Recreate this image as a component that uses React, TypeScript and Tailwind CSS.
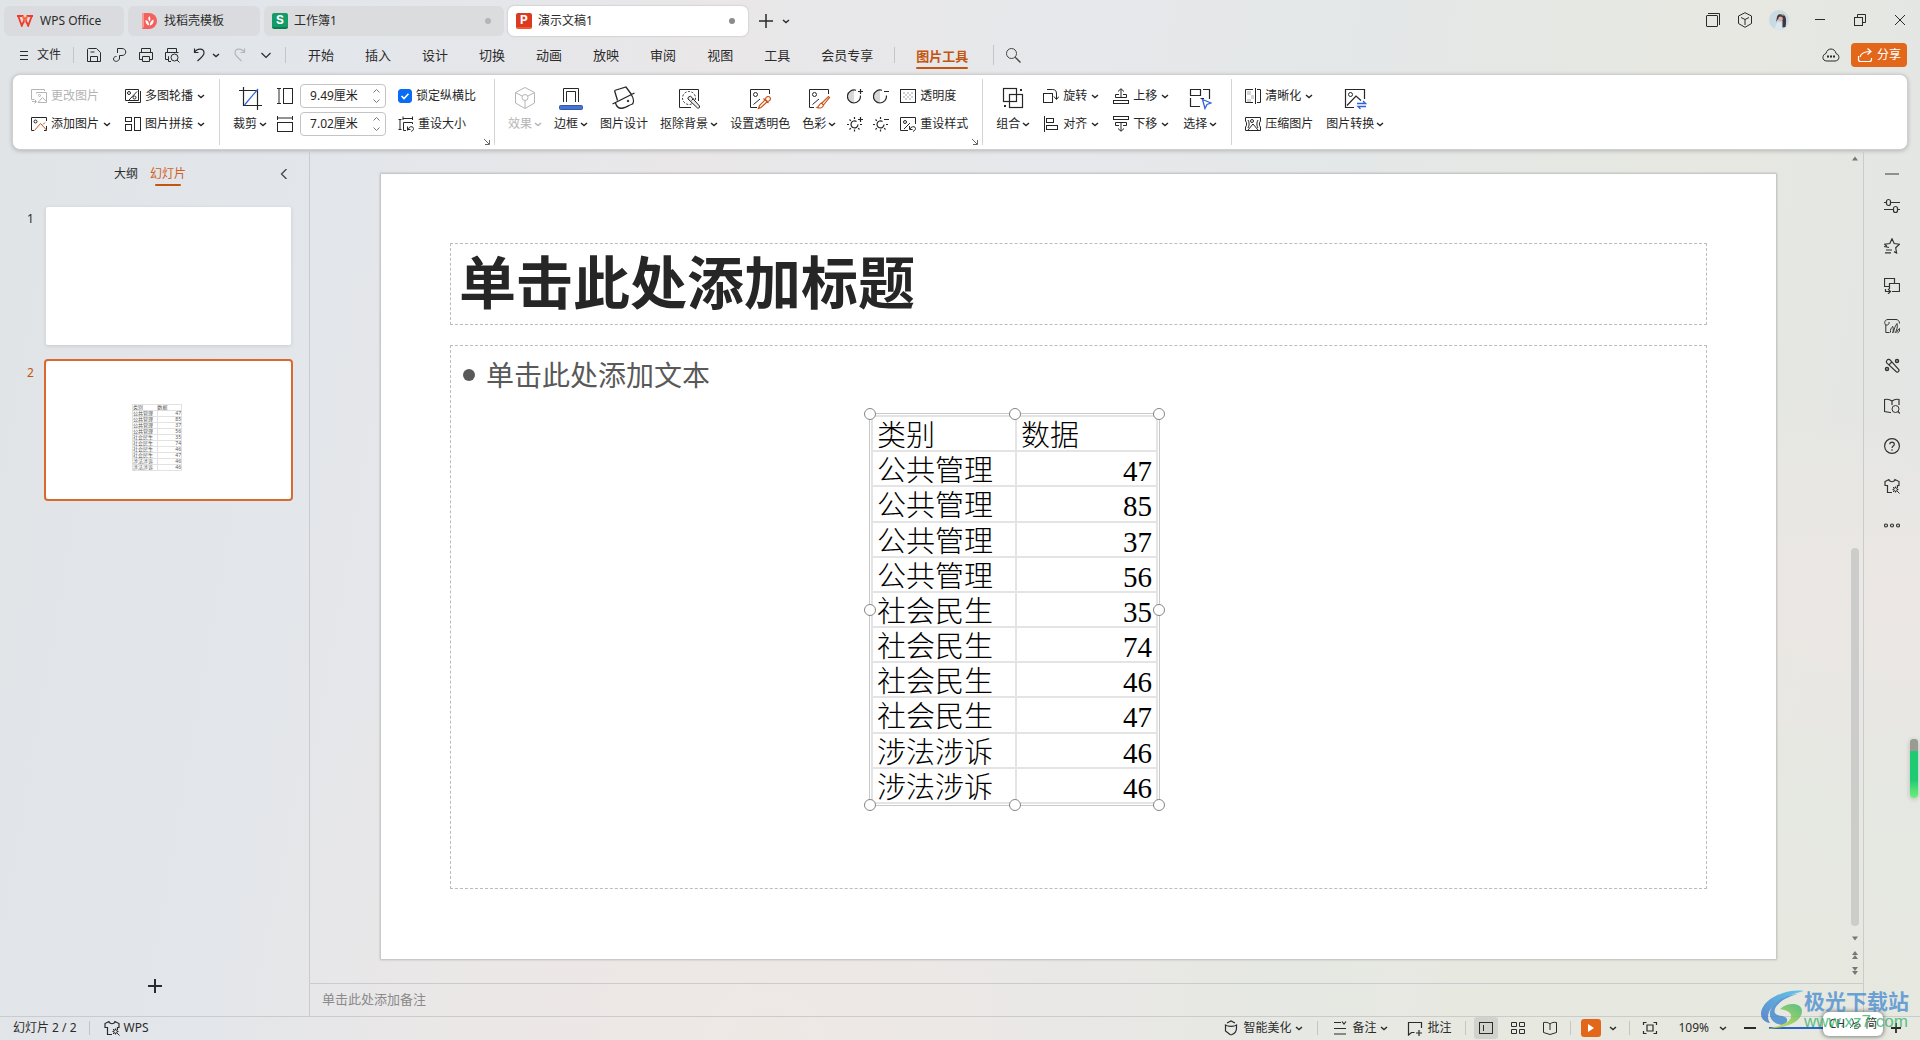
import React, { useState } from 'react';

type IconProps = {
  size?: number;
  className?: string;
  children?: React.ReactNode;
};

function Svg({ size = 16, className = '', children }: IconProps) {
  return (
    <svg
      width={size}
      height={size}
      viewBox={`0 0 ${size} ${size}`}
      fill="none"
      stroke="currentColor"
      strokeWidth={1}
      aria-hidden="true"
      className={`shrink-0 ${className}`}
    >
      {children}
    </svg>
  );
}

function Chevron({ className = '' }: { className?: string }) {
  return (
    <svg width="8" height="8" viewBox="0 0 8 8" fill="none" stroke="currentColor" strokeWidth="1.4" aria-hidden="true" className={`shrink-0 ${className}`}>
      <path d="M1 3 L4 5.6 L7 3" />
    </svg>
  );
}

const ORANGE = '#c9531a';
const BLUE = '#2f62d9';

/* ---------- small ribbon icons ---------- */
const ChangePicIcon = () => (
  <Svg>
    <path d="M3 11.5H.5V1.5H13.5V3M5.5 5.5V4.5H15.5V14.5H7M7 14.5L11.5 9.5L15 13M1 13.500H5.500M3.500 11.500L5.500 13.500L3.500 15.500" />
    <circle cx="8.500" cy="7.500" r="1" />
  </Svg>
);
const AddPicIcon = () => (
  <Svg>
    <path d="M3 14.500H.5V1.500H15.500V5M15.500 10V14.500H13" />
    <circle cx="4.500" cy="5.500" r="1.500" />
    <path d="M3.500 14.500L9.500 7.500L15.500 14M12 8.500L14 6.500" stroke={ORANGE} />
  </Svg>
);
const CarouselIcon = () => (
  <Svg>
    <path d="M13.500 12.500V1.500H.5V12.500H13.500M15.500 3V14.500H3M4 12L12 3.500" />
    <circle cx="4" cy="5" r="1.500" />
    <circle cx="9.500" cy="9.500" r="1.500" />
  </Svg>
);
const CollageIcon = () => (
  <Svg>
    <rect x=".5" y="1.500" width="6" height="4" />
    <rect x=".5" y="8.500" width="6" height="6" />
    <rect x="9.500" y="1.500" width="6" height="13" />
  </Svg>
);
const HeightIcon = () => (
  <Svg>
    <path d="M0 .5H4M0 15.500H4M2 1V15" />
    <rect x="6.500" y=".5" width="9" height="15" />
  </Svg>
);
const WidthIcon = () => (
  <Svg>
    <path d="M.5 0V4M15.500 0V4M1 2H15" />
    <rect x=".5" y="6.500" width="15" height="9" />
  </Svg>
);
const ResetSizeIcon = () => (
  <Svg>
    <path d="M5 .5V4M14.500 .5V4M5 2.500H14.500M.5 3.500H3.500M.5 13.500H3.500M2 3.500V13.500M8 14.500H5.500V6.500H14.500V8M9.500 14.500V12M10.500 13C11 10 15.500 10 15.500 12.500C15.500 14.500 14 15 13 15.500M9.500 10.500V13.500H12.500" />
  </Svg>
);
const ContrastIcon = ({ plus }: { plus?: boolean }) => (
  <Svg>
    <path d="M7 2A6.500 6.500 0 0 0 7 15Z" fill="#d8d8d8" stroke="none" />
    <path d="M9 2.300A6.500 6.500 0 1 0 13.400 7.500M11 3.500H16" strokeWidth="1.200" />
    {plus && <path d="M13.500 1V6" strokeWidth="1.200" />}
  </Svg>
);
const BrightIcon = ({ plus }: { plus?: boolean }) => (
  <Svg>
    <path d="M9.500 5.500A3.500 3.500 0 1 0 11 8.500M7.500 1V3M7.500 13.500V15.500M0 8.500H2M13 8.500H15M2.500 3.500L3.800 4.800M2.500 13.500L3.800 12.200M12.500 13.500L11.200 12.200M11 3.500H16" strokeWidth="1.200" />
    {plus && <path d="M13.500 1V6" strokeWidth="1.200" />}
  </Svg>
);
const TransparencyIcon = () => (
  <Svg>
    <g fill="#d0d0d0" stroke="none">
      <path d="M3 4h2v2h-2zM7 4h2v2h-2zM11 4h2v2h-2zM5 6h2v2h-2zM9 6h2v2h-2zM3 8h2v2h-2zM7 8h2v2h-2zM11 8h2v2h-2zM5 10h2v2h-2zM9 10h2v2h-2z" />
    </g>
    <rect x=".5" y="1.500" width="15" height="13" />
  </Svg>
);
const ResetStyleIcon = () => (
  <Svg>
    <path d="M8 14.500H.5V1.500H15.500V8M4 13L10 7M9.500 10V13.500H12.500M10 13C11 10 15.500 10 15.500 12.500C15.500 14 14.500 14.500 13 15.500" />
    <circle cx="5" cy="6" r="1.500" />
  </Svg>
);
const RotateIcon = () => (
  <Svg>
    <rect x=".5" y="5.500" width="9" height="9" />
    <path d="M4 1.500H9.500C12.500 1.500 13.500 3 13.500 6V11M11 8.500L13.500 11.500L16 8.500" />
  </Svg>
);
const AlignIcon = () => (
  <Svg>
    <path d="M1.500 0V16" />
    <rect x="3.500" y="2.500" width="7" height="4" />
    <rect x="3.500" y="9.500" width="11" height="4" />
  </Svg>
);
const MoveUpIcon = () => (
  <Svg>
    <path d="M8 10V1M5 3.500L8 .7L11 3.500M6 6.500H2.500V9.500H13.500V6.500H10" />
    <rect x=".5" y="12.500" width="15" height="3" />
  </Svg>
);
const MoveDownIcon = () => (
  <Svg>
    <path d="M8 6V15M5 12.500L8 15.300L11 12.500M6 9.500H2.500V6.500H13.500V9.500H10" />
    <rect x=".5" y=".5" width="15" height="3" />
  </Svg>
);
const ClarityIcon = () => (
  <Svg>
    <path d="M2 3h4v4h-4zM6 7h3v4h-3zM2 11h4v3h-4z" fill="#d5d5d5" stroke="none" />
    <path d="M8 1.500H.5V14.500H8M10.500 0V16M12 1.500H15.500V14.500H12" />
  </Svg>
);
const CompressIcon = () => (
  <Svg>
    <path d="M.5 5V1.500H15.500V5M15.500 11V14.500H.5V11M3 14L8 8L13 14M.5 5C2 6 2 10 .5 11M15.500 5C14 6 14 10 15.500 11M3 4C4.500 6 4.500 10 3 12M13 4C11.500 6 11.500 10 13 12" />
    <circle cx="7" cy="5" r="1.500" />
  </Svg>
);

/* ---------- large ribbon icons ---------- */
const CropIcon = () => (
  <Svg size={24}>
    <path d="M1 4.500H19.500V24M5.500 1V19.500H24" strokeWidth="1.200" />
    <path d="M6.500 19L20 3" stroke={BLUE} strokeWidth="1.200" />
  </Svg>
);
const EffectIcon = () => (
  <Svg size={24}>
    <path d="M12 1.500L21.500 6.500V17L12 22.500L2.500 17V6.500ZM2.500 6.500L9 10M21.500 6.500L15 10M12 14.500V22" />
    <circle cx="12" cy="11.500" r="3" />
  </Svg>
);
const BorderIcon = () => (
  <Svg size={24}>
    <path d="M4.500 16V2.500H19.500V16M7.500 16V5.500H16.500V16" />
    <rect x=".5" y="19.500" width="23" height="4" rx="1" fill="#4674cf" stroke="#2f5ab0" />
  </Svg>
);
const DesignIcon = () => (
  <Svg size={24}>
    <path d="M.5 18L22.500 7M2.500 4.500L14 1L19.500 8.500M2.500 4.500L5.500 14.500M3.500 17C4.500 20.500 7 23 11 22C15 21 16 19.500 20.500 18C22 16 21.500 12 19.500 9" strokeWidth="1.300" />
    <circle cx="16" cy="15" r=".8" fill="currentColor" />
  </Svg>
);
const RemoveBgIcon = () => (
  <Svg size={24}>
    <path d="M14 21.500H2.500V3.500H21.500V15" />
    <circle cx="12" cy="12" r="6.500" strokeDasharray="2 1.600" />
    <path d="M11 11.500L13.500 10L22.500 20C23 21.500 22 22.500 20.500 22L11 13Z" fill="#ececec" />
    <path d="M14.500 14.500L16.500 12.500" />
  </Svg>
);
const SetTransIcon = () => (
  <Svg size={24}>
    <path d="M9 21.500H2.500V3.500H21.500V8M5.500 18.500L12 13" />
    <circle cx="7.500" cy="8.500" r="2" />
    <path d="M10.500 22.500L11.500 19.500L17.500 13.500L19.500 15.500L13 21.500ZM15.500 12.500L20.500 17M17.500 13C18 10 21 10 22 11.500C23 13 22 15.500 19.500 15.500" stroke={ORANGE} strokeWidth="1.200" />
  </Svg>
);
const ColorIcon = () => (
  <Svg size={24}>
    <path d="M7 21.500H2.500V3.500H21.500V8M5.500 18.500L12 13" />
    <circle cx="7.500" cy="8.500" r="2" />
    <path d="M14.500 17.500L21.500 10.500L22.500 11.500L16.500 19M14.500 17L16.500 19C16 22 13 22.500 10 21.500C12 20.500 12 18 14.500 17Z" stroke={ORANGE} strokeWidth="1.200" />
  </Svg>
);
const GroupIcon = () => (
  <Svg size={24}>
    <rect x="2.500" y="2.500" width="13" height="13" strokeWidth="1.200" />
    <rect x="8.500" y="8.500" width="13" height="13" strokeWidth="1.200" />
    <path d="M19 3h2v2h-2zM3 19h2v2h-2z" fill="currentColor" stroke="none" />
  </Svg>
);
const SelectIcon = () => (
  <Svg size={24}>
    <path d="M2.500 9.500V3.500H12.500V9.500H2M15 3.500H21.500V13M2.500 12V20.500H12M12.500 12.500H16" strokeWidth="1.200" />
    <path d="M14.500 13.500L23 17L19 18.500L17 22.500Z" stroke={BLUE} strokeWidth="1.300" />
  </Svg>
);
const ConvertIcon = () => (
  <Svg size={24}>
    <path d="M11 21.500H2.500V3.500H21.500V13M4 19.500L13 10L18 14.500" strokeWidth="1.200" />
    <circle cx="7.500" cy="8.500" r="2" />
    <path d="M14 17.500H22.500L20 15M23 20.500H15L17.500 23" stroke={BLUE} strokeWidth="1.300" />
  </Svg>
);

/* ---------- ribbon building blocks ---------- */
function SmallTool({ icon, label, menu, disabled }: { icon: React.ReactNode; label: string; menu?: boolean; disabled?: boolean }) {
  return (
    <button type="button" disabled={disabled} className="flex h-7 items-center gap-1 whitespace-nowrap disabled:text-[#b4b4b4]">
      {icon}
      <span>{label}</span>
      {menu && <Chevron />}
    </button>
  );
}

function LargeTool({ icon, label, menu, disabled }: { icon: React.ReactNode; label: string; menu?: boolean; disabled?: boolean }) {
  return (
    <button type="button" disabled={disabled} className="flex flex-col items-center whitespace-nowrap disabled:text-[#b4b4b4]">
      <span className="flex h-7 items-center pt-1">{icon}</span>
      <span className="flex h-7 items-center gap-0.5">
        {label}
        {menu && <Chevron />}
      </span>
    </button>
  );
}

function SizeInput({ icon, label, value }: { icon: React.ReactNode; label: string; value: string }) {
  return (
    <label className="flex h-7 items-center gap-[7px]">
      {icon}
      <span className="flex h-6 w-[86px] items-center rounded-[4px] border border-[#c4c4c4] bg-white pr-1">
        <input aria-label={label} defaultValue={value} className="w-full min-w-0 bg-transparent pl-[9px] text-xs outline-none" />
        <svg width="9" height="16" viewBox="0 0 9 16" fill="none" stroke="#777" className="shrink-0" aria-hidden="true">
          <path d="M1.500 4.500L4.500 1.500L7.500 4.500M1.500 11.500L4.500 14.500L7.500 11.500" />
        </svg>
      </span>
    </label>
  );
}

const Divider = () => <div className="my-1 w-px shrink-0 self-stretch bg-[#d4d4d4]" />;

const Launcher = () => (
  <button type="button" aria-label="更多选项" className="absolute right-1 bottom-1 text-[#666]">
    <Svg size={7}>
      <path d="M1 1L6 6M6.500 2V6.500H2" />
    </Svg>
  </button>
);

function RibbonGroup({ children, launcher, wide }: { children: React.ReactNode; launcher?: boolean; wide?: boolean }) {
  return (
    <div className={`relative flex shrink-0 items-start pt-[7px] pl-[13px] ${wide ? 'pr-[18px]' : 'pr-[14px]'}`}>
      {children}
      {launcher && <Launcher />}
    </div>
  );
}

/* ---------- header ---------- */
function TitleBar() {
  return (
    <header className="flex h-9 shrink-0 items-end pl-1 text-xs text-[#2b2b2b]">
      <nav aria-label="文档标签" className="flex h-[30px] gap-1">
        <button type="button" className="flex w-[120px] items-center gap-[7px] rounded-md bg-[#d9dbde] pl-[13px]">
          <svg width="16" height="12" viewBox="0 0 16 12" fill="none" stroke="#ee3323" strokeWidth="1.800" aria-hidden="true">
            <path d="M0 1H6.500M9.500 1H16M1.200 1L4.800 10.800L8 3.500L11.200 10.800L14.800 1" stroke="#f03a2a" />
            <path d="M5.500 1L8 6.500L10.500 1" stroke="#ff6c47" />
          </svg>
          WPS Office
        </button>
        <button type="button" className="flex w-[132px] items-center gap-[7px] rounded-md bg-[#d9dbde] pl-3.5">
          <svg width="15" height="16" viewBox="0 0 15 16" aria-hidden="true">
            <path d="M0 0H7A8 8 0 0 1 7 16H0Z" fill="#f2615e" />
            <path d="M0 0H2V14L0 16Z" fill="#f89a94" />
            <path d="M7.200 3C9 5 8.500 7 7.500 8.500C6 6.500 6 5 7.200 3ZM3.500 7C6 7.500 7 9.500 7.200 12.500C4.500 12 3.300 9.500 3.500 7ZM11.500 6.500C9 7.500 8 9.500 7.800 12.500C10.500 12 12 9.500 11.500 6.500Z" fill="#fff" />
          </svg>
          找稻壳模板
        </button>
        <button type="button" className="flex w-60 items-center gap-1.5 rounded-md bg-[#dadcdd] pr-[13px] pl-2">
          <span className="flex size-4 items-center justify-center rounded-xs border-b-2 border-[#0c7d50] bg-[#149c68] font-[Inter] text-xs leading-none font-bold text-white">S</span>
          工作簿1
          <span className="ml-auto size-1.5 rounded-full bg-[#b3b5b7]" />
        </button>
        <button type="button" className="flex w-60 items-center gap-1.5 rounded-md bg-white pr-[13px] pl-2 shadow-[0_0_2px_rgba(0,0,0,0.25)]">
          <span className="flex size-4 items-center justify-center rounded-xs border-b-2 border-[#f4562f] bg-[#dc3a20] font-[Inter] text-xs leading-none font-bold text-white">P</span>
          演示文稿1
          <span className="ml-auto size-1.5 rounded-full bg-[#8b8b8b]" />
        </button>
      </nav>
      <button type="button" aria-label="新建" className="ml-2.5 flex h-[30px] items-center">
        <Svg size={16}>
          <path d="M1 8H15M8 1V15" strokeWidth="1.500" />
        </Svg>
      </button>
      <button type="button" aria-label="标签列表" className="ml-2 flex h-[30px] items-center">
        <Chevron />
      </button>
      <div className="ml-auto flex h-8 items-center">
        <button type="button" aria-label="窗口" className="flex w-8 justify-center">
          <Svg><rect x="1.500" y="3.500" width="11" height="11" rx=".5" /><path d="M3 1.500H14.500V13" /></Svg>
        </button>
        <button type="button" aria-label="应用" className="flex w-8 justify-center">
          <Svg><path d="M8 .7L14.500 4V11.500L8 15.300L1.500 11.500V4ZM4 5.500L8 7.500L12 5.500M8 7.500V13" /></Svg>
        </button>
        <button type="button" aria-label="账户" className="flex w-9 justify-center">
          <svg width="20" height="20" viewBox="0 0 20 20" aria-hidden="true">
            <circle cx="10" cy="10" r="10" fill="#c9dae3" />
            <path d="M8 7C9 3 15 3 16.500 7C17.500 10 17 14 16.500 17L13.500 17.500L13.500 11L9 9L7 12Z" fill="#3d3540" />
            <path d="M10.500 4.500L14 4L15 6Z" fill="#c9a15e" />
            <circle cx="11.500" cy="9" r="2.400" fill="#e0aea4" />
            <path d="M6 19C6 14 9 11.500 12 12L13 19C11 20 8 20 6 19Z" fill="#dce8f0" />
          </svg>
        </button>
        <button type="button" aria-label="最小化" className="ml-[3px] flex w-10 justify-center"><Svg><path d="M3 7.500H13" /></Svg></button>
        <button type="button" aria-label="还原" className="flex w-10 justify-center">
          <Svg><rect x="2.500" y="5.500" width="8" height="8" /><path d="M5.500 5V2.500H13.500V10.500H11" /></Svg>
        </button>
        <button type="button" aria-label="关闭" className="flex w-10 justify-center"><Svg><path d="M3 3L13 13M13 3L3 13" /></Svg></button>
      </div>
    </header>
  );
}

const MENUS = ['开始', '插入', '设计', '切换', '动画', '放映', '审阅', '视图', '工具', '会员专享'];

function MenuBar() {
  return (
    <div className="flex h-[38px] shrink-0 items-center pr-[13px] pl-5 text-[#2b2b2b]">
      <button type="button" className="flex items-center gap-2 text-xs">
        <Svg size={9}><path d="M0 .5H8M0 4.500H8M0 8.500H8" /></Svg>
        文件
      </button>
      <div className="ml-3 h-4 w-px bg-[#c3c6c9]" />
      <div className="flex items-center">
        <button type="button" aria-label="保存" className="ml-3 flex"><Svg><path d="M1.500 2.500C1.500 2 2 1.500 2.500 1.500H10.500L14.500 5.500V14.500H1.500ZM4.500 14.500V9.500H11.500V14.500M4.500 5H8.500" /></Svg></button>
        <button type="button" aria-label="输出" className="ml-2.5 flex"><Svg><path d="M5.500 6V1.500H10C15 1.500 15 8.500 10 8.500H7.500V11C7.500 15 1.500 15.500 1.500 12C1.500 9.800 3.500 9.500 4.500 9.500" /></Svg></button>
        <button type="button" aria-label="打印" className="ml-2.5 flex"><Svg><path d="M3.500 5.500V1.500H12.500V5.500M4 12.500H1.500V5.500H14.500V12.500H12M4.500 9.500H11.500V14.500H4.500Z" /></Svg></button>
        <button type="button" aria-label="打印预览" className="ml-2.5 flex"><Svg><path d="M3.500 5.500V1.500H12.500V5.500M4 12.500H1.500V5.500H14.500M5 9.500H4.500V14.500H7M13 13L15.500 15.500" /><circle cx="10.500" cy="10.500" r="3.500" /></Svg></button>
        <button type="button" aria-label="撤销" className="ml-3 flex"><Svg><path d="M2.500 1.500V5.500H6.500M2.500 5.500C5 1 12 1 12 6C12 9 9.500 10 5.500 14" strokeWidth="1.200" /></Svg></button>
        <button type="button" aria-label="撤销列表" className="ml-1 flex"><Chevron /></button>
        <button type="button" aria-label="重做" className="ml-3 flex text-[#b3b6b9]"><Svg><path d="M12.500 1.500V5.500H8.500M12.500 5.500C10 1 3 1 3 6C3 9 5.500 10 9.500 14" strokeWidth="1.200" /></Svg></button>
        <button type="button" aria-label="自定义" className="ml-3 flex"><Svg size={12}><path d="M1.500 4L6 8.500L10.500 4" strokeWidth="1.200" /></Svg></button>
      </div>
      <div className="ml-[13px] h-4 w-px bg-[#c3c6c9]" />
      <nav aria-label="菜单" className="ml-[22px] flex gap-[31px] pt-0.5 text-[13px]">
        {MENUS.map((m) => (
          <button type="button" key={m}>{m}</button>
        ))}
      </nav>
      <div className="ml-[21px] h-4 w-px bg-[#c3c6c9]" />
      <button type="button" className="ml-[21px] flex flex-col gap-px pt-1 text-[13px] font-bold text-[#c3560f]">
        <span className="leading-5">图片工具</span>
        <span className="h-0.5 w-full rounded-full bg-[#c3560f]" />
      </button>
      <div className="ml-[25px] h-5 w-px bg-[#c3c6c9]" />
      <button type="button" aria-label="搜索" className="ml-[11px] flex text-[#444]"><Svg><circle cx="6.500" cy="6.500" r="5" /><path d="M10.200 10.200L15.500 15.500" strokeWidth="1.300" /></Svg></button>
      <button type="button" aria-label="云" className="ml-auto flex">
        <svg width="18" height="14" viewBox="0 0 18 14" fill="none" stroke="currentColor" aria-hidden="true">
          <path d="M5 13C-.5 13 0 6.500 4 5.500C5 -.5 13 -.5 14 5.500C18 6.500 18 13 13 13Z" />
          <path d="M5 8.500H7M8 8.500H10M11 8.500H13" strokeWidth="2" />
        </svg>
      </button>
      <button type="button" className="ml-[11px] flex h-6 w-14 items-center gap-1 rounded-[4px] bg-[#e2671b] pl-1.5 text-xs text-white">
        <Svg><path d="M1.500 9V12.500C1.500 14 2 14.500 3.500 14.500H12.500C14 14.500 14.500 14 14.500 12.500V11M3 10C4 6 8 4.500 14 4.500M10.500 1.500L14 4.500L10.500 7.500" strokeWidth="1.200" /></Svg>
        分享
      </button>
    </div>
  );
}

function Ribbon() {
  const [locked, setLocked] = useState(true);
  return (
    <section aria-label="图片工具" className="mr-3 ml-3 flex h-[76px] shrink-0 rounded-lg border border-[#cfcfcf] bg-white pl-[5px] text-xs text-[#262626] shadow-[0_1px_4px_rgba(0,0,0,0.22)]">
      <RibbonGroup>
        <div className="flex gap-3.5">
          <div className="flex flex-col items-start">
            <SmallTool icon={<ChangePicIcon />} label="更改图片" disabled />
            <SmallTool icon={<AddPicIcon />} label="添加图片" menu />
          </div>
          <div className="flex flex-col items-start">
            <SmallTool icon={<CarouselIcon />} label="多图轮播" menu />
            <SmallTool icon={<CollageIcon />} label="图片拼接" menu />
          </div>
        </div>
      </RibbonGroup>
      <Divider />
      <RibbonGroup launcher wide>
        <LargeTool icon={<CropIcon />} label="裁剪" menu />
        <div className="ml-2.5 flex flex-col">
          <SizeInput icon={<HeightIcon />} label="高度" value="9.49厘米" />
          <SizeInput icon={<WidthIcon />} label="宽度" value="7.02厘米" />
        </div>
        <div className="ml-3 flex flex-col items-start">
          <label className="flex h-7 items-center gap-1">
            <span className="relative flex size-3.5">
              <input type="checkbox" checked={locked} onChange={(e) => setLocked(e.target.checked)} className="size-3.5 appearance-none rounded-[3px] border border-[#0a6cf5] checked:bg-[#0a6cf5]" />
              {locked && (
                <svg width="14" height="14" viewBox="0 0 14 14" fill="none" stroke="#fff" strokeWidth="1.600" className="pointer-events-none absolute inset-0" aria-hidden="true">
                  <path d="M3.500 7L6 9.500L10.500 4.800" />
                </svg>
              )}
            </span>
            锁定纵横比
          </label>
          <SmallTool icon={<ResetSizeIcon />} label="重设大小" />
        </div>
      </RibbonGroup>
      <Divider />
      <RibbonGroup launcher>
        <div className="flex gap-3">
          <LargeTool icon={<EffectIcon />} label="效果" menu disabled />
          <LargeTool icon={<BorderIcon />} label="边框" menu />
          <LargeTool icon={<DesignIcon />} label="图片设计" />
          <LargeTool icon={<RemoveBgIcon />} label="抠除背景" menu />
          <LargeTool icon={<SetTransIcon />} label="设置透明色" />
          <LargeTool icon={<ColorIcon />} label="色彩" menu />
        </div>
        <div className="ml-[11px] grid grid-cols-2 gap-x-2.5">
          <button type="button" aria-label="增加对比度" className="flex h-7 items-center"><ContrastIcon plus /></button>
          <button type="button" aria-label="降低对比度" className="flex h-7 items-center"><ContrastIcon /></button>
          <button type="button" aria-label="增加亮度" className="flex h-7 items-center"><BrightIcon plus /></button>
          <button type="button" aria-label="降低亮度" className="flex h-7 items-center"><BrightIcon /></button>
        </div>
        <div className="ml-[11px] flex flex-col items-start">
          <SmallTool icon={<TransparencyIcon />} label="透明度" />
          <SmallTool icon={<ResetStyleIcon />} label="重设样式" />
        </div>
      </RibbonGroup>
      <Divider />
      <RibbonGroup>
        <LargeTool icon={<GroupIcon />} label="组合" menu />
        <div className="ml-[13px] flex gap-3.5">
          <div className="flex flex-col items-start">
            <SmallTool icon={<RotateIcon />} label="旋转" menu />
            <SmallTool icon={<AlignIcon />} label="对齐" menu />
          </div>
          <div className="flex flex-col items-start">
            <SmallTool icon={<MoveUpIcon />} label="上移" menu />
            <SmallTool icon={<MoveDownIcon />} label="下移" menu />
          </div>
          <LargeTool icon={<SelectIcon />} label="选择" menu />
        </div>
      </RibbonGroup>
      <Divider />
      <RibbonGroup>
        <div className="flex gap-[13px]">
          <div className="flex flex-col items-start">
            <SmallTool icon={<ClarityIcon />} label="清晰化" menu />
            <SmallTool icon={<CompressIcon />} label="压缩图片" />
          </div>
          <LargeTool icon={<ConvertIcon />} label="图片转换" menu />
        </div>
      </RibbonGroup>
    </section>
  );
}

/* ---------- slide content ---------- */
const ROWS: [string, number][] = [
  ['公共管理', 47],
  ['公共管理', 85],
  ['公共管理', 37],
  ['公共管理', 56],
  ['社会民生', 35],
  ['社会民生', 74],
  ['社会民生', 46],
  ['社会民生', 47],
  ['涉法涉诉', 46],
  ['涉法涉诉', 46],
];

function ThumbTable() {
  return (
    <table className="w-[50px] table-fixed border-collapse text-left text-[5px] leading-none text-[#555]">
      <tbody>
        <tr className="h-1.5">
          <td className="border border-[#e2e2e2]">类别</td>
          <td className="border border-[#e2e2e2]">数据</td>
        </tr>
        {ROWS.map(([name, n], i) => (
          <tr key={i} className="h-1.5">
            <td className="border border-[#e2e2e2]">{name}</td>
            <td className="border border-[#e2e2e2] text-right">{n}</td>
          </tr>
        ))}
      </tbody>
    </table>
  );
}

function SlidePanel() {
  return (
    <aside className="flex w-[310px] shrink-0 flex-col border-r border-[#c9cbcd] text-xs">
      <div className="flex h-[57px] items-start pt-[15px] pl-[114px]">
        <button type="button" className="leading-[18px]">大纲</button>
        <button type="button" className="ml-3 flex flex-col items-center gap-px text-[#d0601f]">
          <span className="leading-[18px]">幻灯片</span>
          <span className="h-0.5 w-[26px] rounded-full bg-[#c3560f]" />
        </button>
        <button type="button" aria-label="收起" className="mr-5 ml-auto flex text-[#444]"><Svg size={10} className="mt-1"><path d="M7.500 0L2.500 5L7.500 10" strokeWidth="1.300" /></Svg></button>
      </div>
      <div className="flex flex-1 flex-col gap-3.5 pl-[27px]">
        <div className="flex">
          <span className="w-[17px] pt-[3px] leading-[18px]">1</span>
          <button type="button" aria-label="幻灯片 1" className="ml-0.5 h-[138px] w-[245px] rounded-xs bg-white shadow-[0_1px_4px_rgba(0,0,0,0.12)]" />
        </div>
        <div className="flex">
          <span className="w-[17px] pt-[5px] leading-[18px] text-[#c3560f]">2</span>
          <button type="button" aria-label="幻灯片 2" className="flex h-[142px] w-[249px] items-center rounded-[4px] border-2 border-[#d9692c] bg-white pt-3.5 pl-[86px]">
            <ThumbTable />
          </button>
        </div>
      </div>
      <div className="flex justify-center pb-[21px]">
        <button type="button" aria-label="新建幻灯片" className="flex"><Svg size={18}><path d="M2 9H16M9 2V16" strokeWidth="2" /></Svg></button>
      </div>
    </aside>
  );
}

const HANDLES = [
  'left-0 top-0',
  'left-1/2 top-0',
  'left-full top-0',
  'left-0 top-1/2',
  'left-full top-1/2',
  'left-0 top-full',
  'left-1/2 top-full',
  'left-full top-full',
];

function PictureOnSlide() {
  return (
    <div className="absolute top-[239px] left-[488px] border border-[#c9c9c9] p-px">
      <table className="h-[389px] w-[287px] table-fixed border-collapse font-['Liberation_Serif','Noto_Sans_CJK_SC',serif] text-[29px] leading-7 font-light text-black">
        <colgroup>
          <col className="w-[144px]" />
          <col />
        </colgroup>
        <tbody>
          <tr>
            <th scope="col" className="border-2 border-[#e4e4e4] px-1 pt-[5px] pb-0 text-left font-light">类别</th>
            <th scope="col" className="border-2 border-[#e4e4e4] px-1 pt-[5px] pb-0 text-left font-light">数据</th>
          </tr>
          {ROWS.map(([name, n], i) => (
            <tr key={i}>
              <td className="border-2 border-[#e4e4e4] px-1 pt-[5px] pb-0">{name}</td>
              <td className="border-2 border-[#e4e4e4] px-1 pt-[5px] pb-0 text-right">{n}</td>
            </tr>
          ))}
        </tbody>
      </table>
      {HANDLES.map((h) => (
        <span key={h} className={`absolute size-3 -translate-x-1/2 -translate-y-1/2 rounded-full border border-[#868686] bg-white ${h}`} />
      ))}
    </div>
  );
}

function Workspace() {
  return (
    <main className="flex min-w-0 flex-1 flex-col">
      <div className="flex min-h-0 flex-1">
        <div className="min-w-0 flex-1 px-[71px] pt-6 pb-6">
          <section aria-label="幻灯片编辑区" className="relative flex h-full flex-col gap-5 bg-white px-[69px] pt-[69px] pb-[70px] shadow-[0_0_2px_1px_rgba(0,0,0,0.2)]">
            <div className="flex h-[82px] shrink-0 items-center border border-dashed border-[#bcbcbc] pb-1 pl-2">
              <h1 className="text-[57px] leading-none font-bold whitespace-nowrap text-[#262626]">单击此处添加标题</h1>
            </div>
            <div className="flex-1 border border-dashed border-[#bcbcbc]">
              <ul className="pt-2 pl-3">
                <li className="flex items-center gap-[11px] text-[28px] leading-[42px] text-[#595959]">
                  <span className="size-3 rounded-full bg-[#595959]" />
                  单击此处添加文本
                </li>
              </ul>
            </div>
            <PictureOnSlide />
          </section>
        </div>
        <div className="flex w-4 shrink-0 flex-col items-center pt-1.5 pb-2">
          <svg width="6" height="5" viewBox="0 0 6 5" fill="#777" aria-hidden="true"><path d="M0 4.500L3 .5L6 4.500Z" /></svg>
          <div className="flex-1" />
          <div className="h-[378px] w-2 rounded-full bg-[#cccdca]" />
          <svg width="6" height="5" viewBox="0 0 6 5" fill="#777" className="mt-2.5" aria-hidden="true"><path d="M0 .5L3 4.500L6 .5Z" /></svg>
          <svg width="6" height="8" viewBox="0 0 6 8" fill="#777" className="mt-2.5" aria-hidden="true"><path d="M0 4L3 0L6 4ZM0 8L3 4L6 8Z" /></svg>
          <svg width="6" height="8" viewBox="0 0 6 8" fill="#777" className="mt-2" aria-hidden="true"><path d="M0 0L3 4L6 0ZM0 4L3 8L6 4Z" /></svg>
        </div>
      </div>
      <div className="flex h-[33px] shrink-0 items-center border-t border-[#c9cbcd] pb-px pl-3">
        <input aria-label="备注" placeholder="单击此处添加备注" className="w-full bg-transparent text-[13px] outline-none placeholder:text-[#8a8a8a]" />
      </div>
    </main>
  );
}

/* ---------- right tool strip ---------- */
const ShirtIcon = () => (
  <Svg>
    <path d="M5 1.500L1 3.500V7.500H3.500V14.500H8M5 1.500C6 4.500 10 4.500 11 1.500L15 3.500V7.500H13.500V9" strokeWidth="1.200" />
    <circle cx="11.500" cy="11.500" r="1.800" />
    <path d="M9 9L10.200 10.200M14 9L12.800 10.200M9 14L10.200 12.800M12.800 12.800L15.500 15.500M11.500 8.500V10M8.500 11.500H10M13 11.500H14.500M11.500 13V14.500" />
  </Svg>
);

const SIDE_TOOLS: { label: string; icon: React.ReactNode }[] = [
  { label: '属性', icon: <Svg><path d="M0 4.500H3M7 4.500H16M0 11.500H9M13 11.500H16" strokeWidth="1.200" /><rect x="2.500" y="1.500" width="4" height="6" rx="2" strokeWidth="1.200" /><rect x="9.500" y="8.500" width="4" height="6" rx="2" strokeWidth="1.200" /></Svg> },
  { label: '收藏', icon: <Svg><path d="M2.800 8.300L.6 6.200L5.800 5.500L8 .8L10.200 5.500L15.400 6.200L11.700 9.800L12.600 15L10 13.600M0 8.500L5 9.500M2 12H8M1 14.800H7" strokeWidth="1.200" /></Svg> },
  { label: '切换', icon: <Svg><path d="M5 8.500H.5V.5H10.500V5M1.500 11V13.500H6M4 11L6.500 13.500L4 16M8 13.500H15.500V5.500H5.500V11" strokeWidth="1.200" /></Svg> },
  { label: '素材', icon: <Svg><path d="M5.500 14.500H1.800V7M1.800 7C-.5 5 1 1.500 4 1.500H12C14 1.500 15.500 3 15.500 5.500M1.800 7C4 7.500 5.500 6 5 4M6.500 14.500C6 11.500 7.500 9.500 8.800 8.500C9.500 11 9.500 13 8.500 15M9.500 14.500C10 11 11 8 13 5.500C14 9 12.500 13 11 15M12.500 14.500C13.500 12.500 14.500 11 15.500 10.500C16 12.500 15 14.500 13.500 15" /></Svg> },
  { label: '魔法棒', icon: <Svg><path d="M2.800 2.500C4 .8 5.800 1.500 6.500 2.300L14.800 11.500C15.500 13 14 15 12.300 13.800L3 5.200C2.200 4.200 2.200 3.300 2.800 2.500ZM5 6.800L7.800 4" strokeWidth="1.200" /><circle cx="13" cy="3" r="1.500" strokeWidth="1.500" /><circle cx="3" cy="11" r="1.500" strokeWidth="1.500" /></Svg> },
  { label: '查阅', icon: <Svg><path d="M7 14.500H6L.5 13.500V1.500C3 1 6 1.500 8 3C10 1.500 13 1 15 1.500V7M8 3V7M14 13.500L16 15.500" strokeWidth="1.200" /><circle cx="11.500" cy="11" r="3.500" /></Svg> },
  { label: '帮助', icon: <Svg><circle cx="8" cy="8" r="7.400" strokeWidth="1.200" /><path d="M5.800 6.200C5.800 3.300 10.300 3.300 10.300 6.200C10.300 8 8 8 8 10M8 11.300V12.700" strokeWidth="1.200" /></Svg> },
  { label: '皮肤', icon: <ShirtIcon /> },
  { label: '更多', icon: <Svg><circle cx="2" cy="7.500" r="1.500" strokeWidth="1.200" /><circle cx="8" cy="7.500" r="1.500" strokeWidth="1.200" /><circle cx="14" cy="7.500" r="1.500" strokeWidth="1.200" /></Svg> },
];

function SideTools() {
  return (
    <aside aria-label="侧边工具" className="flex w-[57px] shrink-0 flex-col items-center border-l border-[#c9cbcd] pt-[23px] text-[#333]">
      <div className="h-0.5 w-3.5 bg-[#8d8f90]" />
      <div className="mt-[11px] flex flex-col">
        {SIDE_TOOLS.map((t) => (
          <button type="button" key={t.label} aria-label={t.label} className="flex h-10 w-10 items-center justify-center">{t.icon}</button>
        ))}
      </div>
    </aside>
  );
}

/* ---------- status bar ---------- */
const StatusDivider = ({ className = '' }: { className?: string }) => <div className={`h-3.5 w-px bg-[#c3c6c9] ${className}`} />;

function StatusBar() {
  return (
    <footer className="flex h-6 shrink-0 items-center border-t border-[#c9cbcd] pr-[18px] pb-px pl-[13px] text-xs text-[#2b2b2b]">
      <span>幻灯片 2 / 2</span>
      <StatusDivider className="ml-3" />
      <button type="button" className="ml-3.5 flex items-center gap-1"><ShirtIcon />WPS</button>
      <button type="button" className="ml-auto flex items-center gap-1">
        <Svg><path d="M2.500 5V11L7 14.500C8 15 9 14.500 9 14.500M13.500 5V8M13.500 8C13.500 11 13 13 9 14.500M2 4.500C4 7 12 7 14 4.500M4 3L8 1L12 3" strokeWidth="1.200" /></Svg>
        智能美化
        <Chevron />
      </button>
      <StatusDivider className="ml-3.5" />
      <button type="button" className="ml-3.5 flex items-center gap-1">
        <Svg><path d="M2 2.500H9M2 8.500H14M2 14H14M10 1.500L12 4L14 1.500" strokeWidth="1.200" /></Svg>
        备注
        <Chevron />
      </button>
      <button type="button" className="ml-[19px] flex items-center gap-1">
        <Svg><path d="M7.500 12.500H4.500L1.500 15V2.500H14.500V8M12 10V16M9 13H15" strokeWidth="1.200" /></Svg>
        批注
      </button>
      <StatusDivider className="ml-3.5" />
      <button type="button" aria-label="普通视图" className="ml-2 flex h-[22px] w-6 items-center justify-center rounded-[3px] bg-[#d2d2cd]"><Svg><rect x="1.500" y="2.500" width="13" height="11" /><path d="M5.500 5V11" /></Svg></button>
      <button type="button" aria-label="幻灯片浏览" className="ml-3 flex"><Svg><path d="M1.500 2.500H6.500V6.500H1.500ZM9.500 2.500H14.500V6.500H9.500ZM1.500 9.500H6.500V13.500H1.500ZM9.500 9.500H14.500V13.500H9.500Z" /></Svg></button>
      <button type="button" aria-label="阅读视图" className="ml-4 flex"><Svg><path d="M1.500 2.500C4 2 6.500 2.500 8 4C9.500 2.500 12 2 14.500 2.500V12.500L8 14.500L1.500 12.500ZM8 4V10" /></Svg></button>
      <StatusDivider className="ml-3" />
      <button type="button" aria-label="播放" className="ml-2.5 flex h-[18px] w-5 items-center justify-center rounded-[3px] bg-[#e2671b]"><svg width="6" height="8" viewBox="0 0 6 8" fill="#fff" aria-hidden="true"><path d="M0 0L6 4L0 8Z" /></svg></button>
      <button type="button" aria-label="播放选项" className="ml-2 flex"><Chevron /></button>
      <StatusDivider className="ml-3" />
      <button type="button" aria-label="适应窗口" className="ml-3 flex"><Svg><path d="M1.500 5V2.500H4.500M11.500 2.500H14.500V5M14.500 11V13.500H11.500M4.500 13.500H1.500V11M5 5H11V11H5Z" strokeWidth="1.200" /></Svg></button>
      <button type="button" className="ml-5 flex items-center gap-2.5">
        <span>109%</span>
        <Chevron />
      </button>
      <button type="button" aria-label="缩小" className="ml-4 flex"><Svg size={14}><path d="M1 7H13" strokeWidth="2" /></Svg></button>
      <input type="range" aria-label="缩放" defaultValue={62} className="mx-3 h-0.5 w-[109px] appearance-none bg-[#2764d0] [&::-webkit-slider-thumb]:size-2.5 [&::-webkit-slider-thumb]:appearance-none [&::-webkit-slider-thumb]:rounded-full [&::-webkit-slider-thumb]:bg-[#2764d0]" />
      <button type="button" aria-label="放大" className="flex"><Svg size={12}><path d="M1 6H11M6 1V11" strokeWidth="1.800" /></Svg></button>
    </footer>
  );
}

/* ---------- floating overlays ---------- */
function Overlays() {
  return (
    <>
      <div className="absolute top-[739px] right-0.5 flex h-[59px] w-2 flex-col overflow-hidden rounded-full bg-gradient-to-b from-[#1fcb72] from-70% to-[#6bf07a] shadow-[0_1px_4px_1px_rgba(0,0,0,0.14)]">
        <div className="h-3 bg-[#9c9a95]" />
      </div>
      <div className="absolute right-[37px] bottom-1 flex h-6 w-[60px] items-center justify-center gap-1 rounded-md bg-white text-xs text-[#333] shadow-[0_0_4px_1px_rgba(0,0,0,0.45)]">
        <span>CH</span>
        <Svg size={12}><path d="M3 1C6 5 3 8 1 10M4 6L10 3.500M5 10C8 11 11 10 11 7C11 5 8 6 5 9" /></Svg>
        <span>简</span>
      </div>
      <div className="pointer-events-none absolute right-[11px] bottom-[9px] flex items-center opacity-80">
        <svg width="44" height="42" viewBox="0 0 44 42" aria-hidden="true">
          <defs>
            <linearGradient id="swirlBlue" x1="0" y1="1" x2="1" y2="0"><stop offset="0" stopColor="#3c6fc4" /><stop offset="1" stopColor="#3fc0ee" /></linearGradient>
            <linearGradient id="swirlGreen" x1="0" y1="1" x2="1" y2="0"><stop offset="0" stopColor="#f0d43a" /><stop offset=".5" stopColor="#8ccb4c" /><stop offset="1" stopColor="#35b56e" /></linearGradient>
          </defs>
          <path d="M44 2C30 0 10 6 3 18C-2 27 3 33 10 34C6 28 8 20 18 13C26 7 36 4 44 2Z" fill="url(#swirlBlue)" />
          <path d="M38 5C24 8 12 18 15 24C17 28 24 25 27 30C28 33 25 35 22 36C14 35 9 30 10 23C12 14 25 6 38 5Z" fill="#3d86cf" />
          <path d="M20 20C28 12 42 14 42 22C42 32 28 40 4 40C18 38 30 34 31 28C32 23 26 21 20 20Z" fill="url(#swirlGreen)" />
        </svg>
        <div className="flex flex-col">
          <span className="text-[21px] leading-6 font-bold text-[#4d8fd1]">极光下载站</span>
          <span className="font-['Liberation_Sans'] text-[17px] leading-[18px] text-[#35b56e]">www.xz7.com</span>
        </div>
      </div>
    </>
  );
}

export default function App() {
  return (
    <div className="relative flex h-screen min-h-[900px] flex-col overflow-hidden bg-[linear-gradient(100deg,#e0e4e7_0%,#e3e6ea_18%,#e9e7e8_34%,#e6e8eb_52%,#e4e7e7_66%,#e7e8e1_82%,#e2e5e6_100%)] font-['Noto_Sans','Noto_Sans_CJK_SC',sans-serif] text-[#2b2b2b]">
      <div className="absolute inset-0 bg-[radial-gradient(ellipse_at_40%_100%,#eee8e5_0%,transparent_35%),radial-gradient(ellipse_at_100%_58%,#ece7e4_0%,transparent_25%),radial-gradient(ellipse_at_95%_100%,#e7e9e0_0%,transparent_40%)]" />
      <div className="relative flex min-h-0 flex-1 flex-col">
        <TitleBar />
        <MenuBar />
        <Ribbon />
        <div className="flex min-h-0 flex-1">
          <SlidePanel />
          <Workspace />
          <SideTools />
        </div>
        <StatusBar />
      </div>
      <Overlays />
    </div>
  );
}
